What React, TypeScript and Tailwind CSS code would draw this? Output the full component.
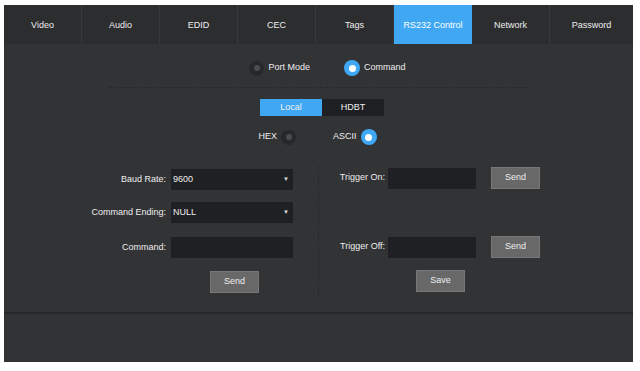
import { useState } from "react";

const TABS = ["Video", "Audio", "EDID", "CEC", "Tags", "RS232 Control", "Network", "Password"];

function Radio({ on }: { on: boolean }) {
  return on ? (
    <span className="w-[16px] h-[16px] rounded-full bg-[#3fa9f5] flex items-center justify-center">
      <span className="w-[7px] h-[7px] rounded-full bg-white" />
    </span>
  ) : (
    <span className="w-[15px] h-[15px] rounded-full bg-[#27282a] flex items-center justify-center">
      <span className="w-[6px] h-[6px] rounded-full bg-[#4b4c4e]" />
    </span>
  );
}

function Select({ value }: { value: string }) {
  return (
    <div className="w-[122px] h-[21px] bg-[#1f2023] flex items-center justify-between pl-[2px] pr-[4px]">
      <span>{value}</span>
      <span className="text-[6px] text-[#ddd]">▼</span>
    </div>
  );
}

function Btn({ label }: { label: string }) {
  return (
    <div className="w-[49px] h-[22px] bg-[#686868] border border-[#777] flex items-center justify-center text-[#eee]">
      {label}
    </div>
  );
}

export default function App() {
  const [mode, setMode] = useState("command");
  const [src, setSrc] = useState("local");
  const [fmt, setFmt] = useState("ascii");

  return (
    <div
      className="w-[640px] h-[371px] bg-white pl-[4px] pt-[5px] text-[9px] text-[#eeeeee]"
      style={{ fontFamily: '"Liberation Sans", Arial, sans-serif' }}
    >
      <div className="w-[629px] h-[357px] bg-[#323335] flex flex-col">
        {/* Tabs */}
        <div className="h-[39px] flex bg-[#2c2d2f]">
          {TABS.map((t, i) => (
            <div
              key={t}
              className={`flex items-center justify-center pt-[2px] ${i < 7 ? "w-[78px]" : "flex-1"} ${
                t === "RS232 Control" ? "bg-[#40a8f2] text-white" : i < 7 ? "border-r border-[#38393b]" : ""
              }`}
            >
              {t}
            </div>
          ))}
        </div>

        {/* Port mode */}
        <div className="h-[26px] mt-[11px] flex items-center justify-center gap-[34px]">
          <button onClick={() => setMode("port")} className="flex items-center gap-[4px] ml-[18px]">
            <Radio on={mode === "port"} />
            <span>Port Mode</span>
          </button>
          <button onClick={() => setMode("command")} className="flex items-center gap-[4px]">
            <Radio on={mode === "command"} />
            <span>Command</span>
          </button>
        </div>
        <div className="mx-auto w-[420px] border-t border-dashed border-[#27282a] mt-[6px]" />

        {/* Local / HDBT */}
        <div className="flex justify-center mt-[11px] ml-[7px]">
          <button
            onClick={() => setSrc("local")}
            className={`w-[62px] h-[17px] flex items-center justify-center ${
              src === "local" ? "bg-[#40a8f2]" : "bg-[#1f2023]"
            }`}
          >
            Local
          </button>
          <button
            onClick={() => setSrc("hdbt")}
            className={`w-[62px] h-[17px] flex items-center justify-center ${
              src === "hdbt" ? "bg-[#40a8f2]" : "bg-[#1f2023]"
            }`}
          >
            HDBT
          </button>
        </div>

        {/* HEX / ASCII */}
        <div className="h-[20px] mt-[11px] flex items-center justify-center gap-[37px] ml-[-2px]">
          <button onClick={() => setFmt("hex")} className="flex items-center gap-[4px]">
            <span>HEX</span>
            <Radio on={fmt === "hex"} />
          </button>
          <button onClick={() => setFmt("ascii")} className="flex items-center gap-[4px]">
            <span>ASCII</span>
            <Radio on={fmt === "ascii"} />
          </button>
        </div>

        {/* Form */}
        <div className="grid grid-cols-[314px_1fr] mt-[13px]">
          <div className="flex flex-col pt-[9px]">
            <div className="flex items-center gap-[5px] h-[21px]">
              <span className="w-[162px] text-right">Baud Rate:</span>
              <Select value="9600" />
            </div>
            <div className="flex items-center gap-[5px] h-[21px] mt-[12px]">
              <span className="w-[162px] text-right">Command Ending:</span>
              <Select value="NULL" />
            </div>
            <div className="flex items-center gap-[5px] h-[21px] mt-[14px]">
              <span className="w-[162px] text-right">Command:</span>
              <div className="w-[122px] h-[21px] bg-[#1f2023]" />
            </div>
            <div className="ml-[206px] mt-[13px]">
              <Btn label="Send" />
            </div>
          </div>
          <div className="flex flex-col border-l border-dashed border-[#27282a] h-[130px] mt-[6px]">
            <div className="flex items-center h-[22px] mt-[1px]">
              <span className="w-[66px] text-right">Trigger On:</span>
              <div className="w-[88px] h-[21px] bg-[#1f2023] ml-[3px]" />
              <div className="ml-[15px]">
                <Btn label="Send" />
              </div>
            </div>
            <div className="flex items-center h-[22px] mt-[47px]">
              <span className="w-[66px] text-right">Trigger Off:</span>
              <div className="w-[88px] h-[21px] bg-[#1f2023] ml-[3px]" />
              <div className="ml-[15px]">
                <Btn label="Send" />
              </div>
            </div>
            <div className="ml-[97px] mt-[12px]">
              <Btn label="Save" />
            </div>
          </div>
        </div>

        <div className="mt-[16px] border-t-2 border-[#262729]" />
      </div>
    </div>
  );
}
